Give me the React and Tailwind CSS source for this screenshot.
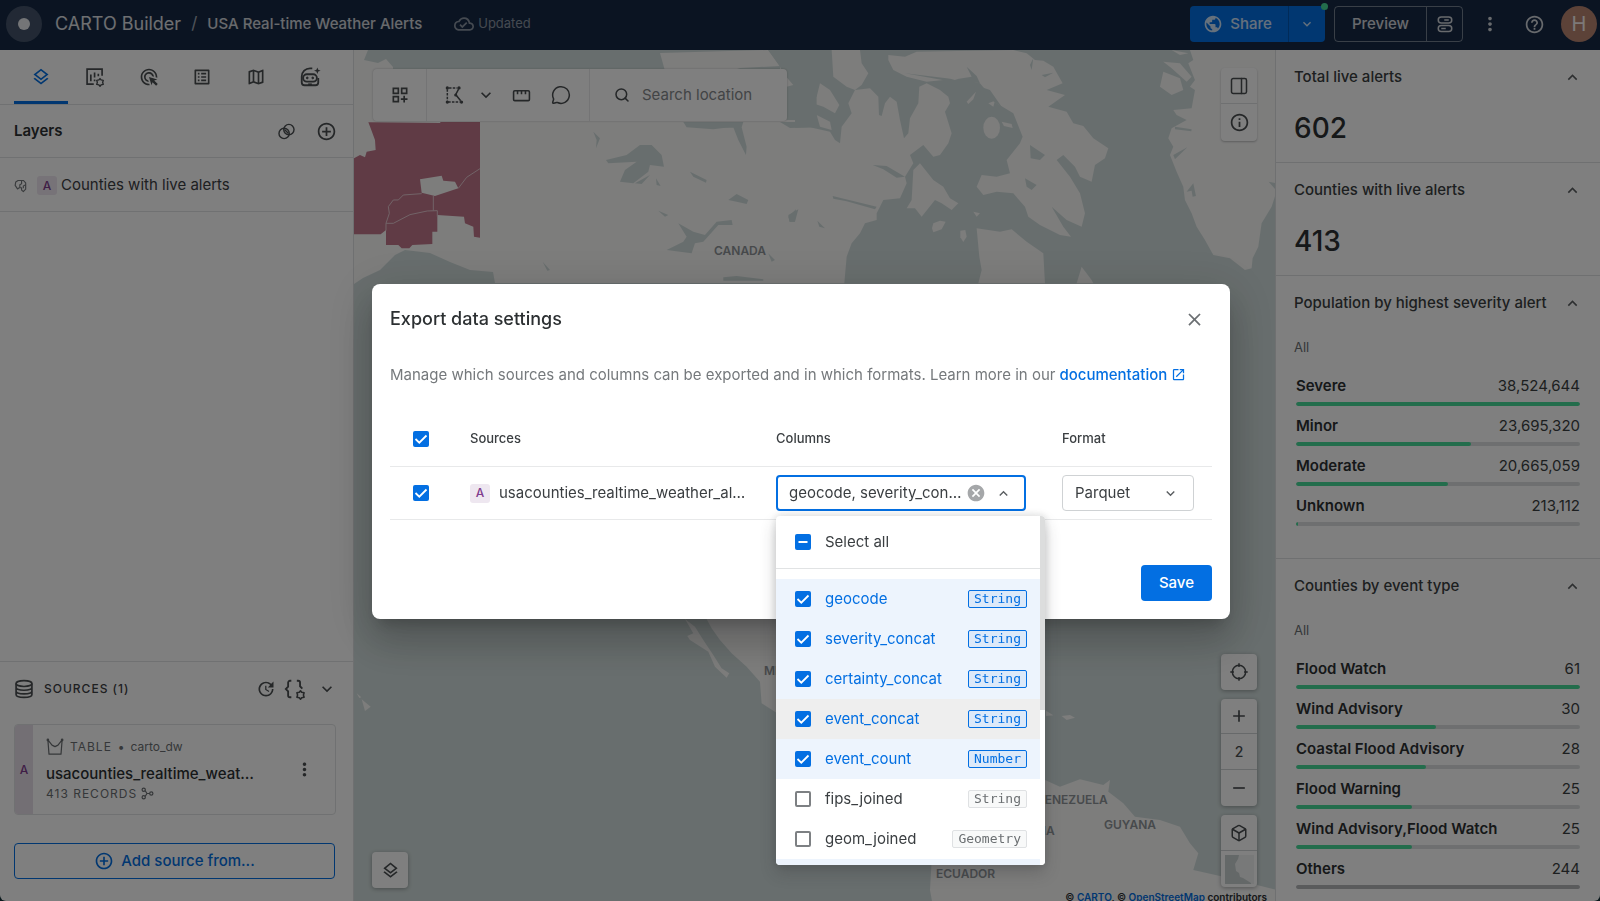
import React, { useState } from 'react';
import {
  MdOutlineLayers, MdAdsClick, MdOutlineListAlt, MdOutlineMap, MdOutlineCloudDone, MdPublic,
  MdKeyboardArrowDown, MdKeyboardArrowUp, MdMoreVert, MdHelpOutline, MdAddCircleOutline,
  MdOutlineDashboardCustomize, MdInfoOutline, MdCancel, MdClose, MdOpenInNew, MdAdd, MdRemove, MdUpdate,
} from 'react-icons/md';
import { MessageCircle, Search, PanelRight, Box } from 'lucide-react';

function Svg({ size = 20, sw = 2, children, className = '' }) {
  return (
    <svg width={size} height={size} viewBox="0 0 24 24" fill="none" stroke="currentColor" strokeWidth={sw} className={className} aria-hidden="true">
      {children}
    </svg>
  );
}

function Gear({ x, y }) {
  return (
    <g transform={`translate(${x} ${y})`}>
      <path d="M0-4.6 1.3-3 3.9-2.4 3.2 0 3.9 2.4 1.3 3 0 4.6-1.3 3-3.9 2.4-3.2 0-3.9-2.4-1.3-3Z" strokeWidth="1.7" strokeLinejoin="round" />
    </g>
  );
}

const ChartGear = () => (
  <Svg size={20}>
    <path d="M10.5 20.5H2.5V2.5h18v8" />
    <path d="M7 9v8M11.5 6.5v6M16 8v3M11.5 15v2" />
    <Gear x={18} y={18.5} />
  </Svg>
);

const Robot = () => (
  <Svg size={22}>
    <path d="M14.5 2.5H12a9 9 0 0 0-9 9V18a3 3 0 0 0 3 3h12a3 3 0 0 0 3-3v-5" />
    <rect x="4.5" y="9" width="15" height="8" rx="4" />
    <path d="M10 20h4" />
    <circle cx="9" cy="13" r="1" fill="currentColor" strokeWidth="1" />
    <circle cx="15" cy="13" r="1" fill="currentColor" strokeWidth="1" />
    <path d="M20 1.5l1 2.6 2.6 1-2.6 1-1 2.6-1-2.6-2.6-1 2.6-1Z" fill="currentColor" stroke="none" />
  </Svg>
);

const Blend = () => (
  <Svg size={19} sw={1.8}>
    <circle cx="9" cy="14.5" r="6.5" />
    <circle cx="15" cy="9.500" r="6.5" />
    <path d="M9.5 9.5 14.5 14.5" />
  </Svg>
);

const Database = () => (
  <Svg size={20}>
    <ellipse cx="12" cy="5.5" rx="9.5" ry="3.5" />
    <path d="M2.5 5.5v13c0 2 4 3.5 9.5 3.5s9.5-1.5 9.5-3.5v-13M2.5 10c0 2 4 3.500 9.5 3.500s9.5-1.500 9.5-3.500M2.5 14.300c0 2 4 3.500 9.5 3.500s9.5-1.500 9.5-3.500" />
  </Svg>
);

const BracesGear = () => (
  <Svg size={22}>
    <path d="M8 3H6.500a2 2 0 0 0-2 2v4.500L2 12l2.500 2.500V19a2 2 0 0 0 2 2H8" />
    <path d="M14 3h1.500a2 2 0 0 1 2 2v4l2.500 2.500" />
    <Gear x={18} y={18.500} />
  </Svg>
);

const Crown = () => (
  <Svg size={18} sw={1.600}>
    <path d="M2.500 2.500 8 9.500 12 11.500 16 9.500 21.500 2.500 20 21.500H4Z" strokeLinejoin="round" />
    <circle cx="2.500" cy="2.500" r="1" fill="currentColor" />
    <circle cx="21.500" cy="2.500" r="1" fill="currentColor" />
  </Svg>
);

const Relation = () => (
  <Svg size={13} sw={2.200}>
    <circle cx="5" cy="5" r="3" />
    <circle cx="5" cy="19" r="3" />
    <circle cx="19" cy="12" r="3" />
    <path d="M7.500 6.500 11 12l-3.500 5.500M11 12h5" />
  </Svg>
);

const Polygons = () => (
  <Svg size={14} sw={2} className="text-[#75797c]">
    <path d="M7 2.500h9l4 4v11l-4 4-3-2.500V15L9 15l-3 2-4-6 1-6Z" strokeLinejoin="round" />
    <path d="M13 3v5l-3 2v5M20 10l-4 2v4" />
  </Svg>
);

const Lasso = () => (
  <Svg size={20} sw={1.800}>
    <path d="M4 5v14M5 20.500h14M6 3.500h10" strokeDasharray="3 1.500" />
    <path d="M17.500 5 14 11.500 20 19" />
    <g fill="currentColor" stroke="none">
      <circle cx="4" cy="3.500" r="2" />
      <circle cx="4" cy="20.500" r="2" />
      <circle cx="18" cy="3.500" r="2" />
      <circle cx="21" cy="20.500" r="2" />
      <circle cx="14" cy="12" r="1.800" />
    </g>
  </Svg>
);

const Ruler = () => (
  <Svg size={19}>
    <rect x="2" y="6" width="20" height="12.500" rx="1.500" />
    <path d="M7 6v4.500M12 6v4.500M17 6v4.500" />
  </Svg>
);

const Locate = () => (
  <Svg size={20} sw={1.800}>
    <circle cx="12" cy="12" r="8" />
    <path d="M12 1.500v4.500M12 18v4.500M1.500 12h4.500M18 12h4.500" />
  </Svg>
);

const Toggles = () => (
  <Svg size={18}>
    <rect x="3" y="2.500" width="18" height="8" rx="4" />
    <rect x="3" y="14" width="18" height="8" rx="4" />
    <path d="M11 6.500h6M7 18h6" />
  </Svg>
);

function WorldMap() {
  return (
    <svg className="absolute inset-0 h-full w-full" viewBox="354 50 921 851" preserveAspectRatio="xMinYMin slice" aria-hidden="true">
      <rect x="354" y="50" width="2000" height="1200" fill="#d1dddc" />
      <g fill="#fafaf9">
        <path d="M354 50h14l-4 10 14 3 8-4 7 8v4h400v60H354Z" />
        <path d="M660 53l108-3 12 16-40 2-15 5-60-2Z" />
        <path d="M354 120H795v163H495l-2-11-23-2-20-8-20-9-25-3-10 5-15 15-17 8-9 6Z" />
        <g transform="translate(780 40) scale(.3333)">
          <path d="M-60 268 0 265 90 262 150 275 165 300 180 310 185 260 215 220 205 190 225 150 270 145 295 170 297 225 305 228 315 190 330 170 350 185 360 240 372 295 385 280 390 235 415 190 418 140 440 130 480 150 505 170 510 190 495 215 515 280 505 310 480 345 460 350 430 315 390 345 400 370 375 410 380 430 360 475 310 480 300 500 290 520 290 540 255 550 240 580 215 610 200 650 193 730-60 730Z" />
          <path d="M155 30h85l5 40 20 30-20 35-20 15-25-10-40-30Z" />
          <path d="M120 130 150 150 178 195 165 220 130 200 85 185 110 170Z" />
          <path d="M110 225 150 245 155 270 120 260Z" />
          <path d="M0 75 45 110v25l-25 5-2 100H0Z" />
          <path d="M325 45 375 50 410 35 700 30 740 40 765 60 790 62 820 80 848 130 800 150 855 165 805 200 860 215 880 250 910 258 940 295 985 325 975 355 945 375 935 425 900 410 885 380 850 345 830 360 870 410 900 460 915 520 905 560 860 540 815 500 850 560 873 590 840 585 780 555 745 530 735 500 700 460 650 455 610 465 590 440 605 405 650 410 690 400 680 360 720 310 728 290 700 220 650 190 600 130 560 120 490 120 440 125 380 110 340 90 325 60Z" />
          <path d="M400 390 420 370 460 420 490 440 510 475 535 490 515 510 485 490 465 480 425 530 405 505 380 505 395 480Z" />
          <ellipse cx="635" cy="263" rx="25" ry="33" />
          <path d="M460 550 480 542 497 545 485 568 460 577 456 565Z" />
          <path d="M541 572 556 570 560 590 550 606 541 592Z" />
          <path d="M665 245 695 252 698 264 672 258ZM560 185 588 155 580 178 565 192ZM625 190 645 182 640 200ZM580 515 600 520 590 530Z" />
          <path d="M590 565 660 575 695 568 740 605 790 640 795 730H595L605 690 598 650Z" />
          <path d="M905 680 935 720 940 730H890Z" />
          <path d="M1230 30 1240 60 1225 70 1245 120 1230 140 1245 150 1235 205 1180 210 1190 225 1220 240 1175 265 1165 295 1180 320 1170 345 1190 395 1210 440 1215 480 1235 520 1250 560 1275 600 1300 645 1350 655 1395 690 1415 685 1418 655 1435 620 1445 550 1475 500 1488 460V30Z" />
          <path d="M1150 65 1200 70 1235 110 1220 125 1175 85ZM1150 95 1200 115 1210 150 1175 165 1140 140ZM1175 30 1225 40 1200 45Z" />
        </g>
        <g transform="translate(350 610) scale(.3333)">
          <path d="M1005 27 1035 50 1060 90 1090 135 1115 175 1138 190 1130 203 1095 170 1075 125 1020 90 1012 78 1030 70Z" />
          <path d="M1070 27 1085 55 1110 90 1145 130 1190 170 1230 215 1235 280 1290 315 1500 330V27Z" />
          <path d="M35 268 62 290 45 303ZM20 250 34 262 28 264Z" />
        </g>
        <g transform="translate(770 460) scale(.3333)">
          <path d="M500 940H780L870 980 930 958 1000 975 1020 960 1015 995 1060 1030 1095 1070 1170 1080 1230 1100 1260 1150 1285 1180 1270 1230 1380 1255 1520 1290V1400H500L480 1290Z" />
          <path d="M875 768 900 765 915 773 890 780ZM828 752 850 766 828 768Z" />
        </g>
      </g>
      <g fill="#d1dddc">
        <g transform="translate(350 40) scale(.3333)">
          <path d="M768 360 830 345 870 315 905 315 935 345 942 380 900 375 895 395 850 430 810 425 825 390 860 365 775 370Z" />
          <path d="M985 550 1030 575 1065 585 1100 545 1145 540 1148 555 1105 555 1060 605 1035 610 1025 640 950 630 1000 605 1010 590Z" />
          <path d="M1000 246 1180 246 1175 262 1120 264 1090 268 1010 262ZM1150 262 1175 262 1190 320 1188 345 1165 300Z" />
          <path d="M1290 246H1400V262L1320 264Z" />
          <path d="M1255 30H1400V240H1310V140L1330 135 1300 100 1290 80Z" />
          <path d="M730 275 750 295 738 325 740 300ZM1020 395 1070 420 1068 428 1030 410ZM1135 480 1160 462 1195 480 1190 492 1160 485ZM925 512 955 525 945 530ZM1315 530 1338 508 1335 545 1320 545ZM855 430 900 405 875 432ZM918 415 932 438 920 435ZM1120 712 1160 708 1240 718V722H1120ZM1255 640 1275 660 1265 665ZM578 665 600 690 592 692Z" />
        </g>
        <g transform="translate(780 40) scale(.3333)">
          <path d="M750 315 795 345 780 360 752 355ZM735 415 770 435 755 450 740 440ZM278 375 320 378 375 410 350 413 310 388ZM158 468 290 500 285 508 200 484 160 476ZM25 525 55 508 45 545 28 545ZM112 542 135 565 118 560ZM1185 260 1235 268 1234 274 1185 268ZM1180 345 1222 322 1185 358ZM1220 455 1240 430 1248 468 1238 470 1235 452Z" />
          <path d="M375 100 500 115 600 130 590 108 560 80 575 110 500 122ZM570 130 630 150 665 200 620 170ZM750 75 760 55 755 90ZM785 105 820 98 795 112ZM1466 425 1488 430V450Z" />
        </g>
      </g>
      <g transform="translate(350 40) scale(.3333)">
        <path fill="#c0768a" d="M55 247 270 249 272 246H390V593L372 590 370 560 345 550 342 530 262 525V575H247V612L187 615 178 625H155L145 615H108V570L92 583H12V355L30 345 45 352 50 335 77 330 75 300 62 265Z" />
        <path fill="#fafaf9" d="M210 418 275 407 280 422 315 425 325 445 255 468 215 458Z" />
        <path fill="none" stroke="#e4c7cf" strokeWidth="3" d="M325 445 350 412 390 386M215 461 160 465 145 480H130L115 500 118 520 108 550 130 550 180 524 232 513 262 512V530M250 468V512M108 550V572" />
      </g>
      <g fill="#8f9498" fontFamily="Inter, sans-serif" fontSize="12" fontWeight="600">
        <text x="714" y="255">CANADA</text>
        <text x="764" y="675">MEXICO</text>
        <text x="1036" y="804">VENEZUELA</text>
        <text x="990" y="835">COLOMBIA</text>
        <text x="1104" y="829">GUYANA</text>
        <text x="936" y="878">ECUADOR</text>
      </g>
    </svg>
  );
}

function Badge() {
  return <span className="flex h-[19px] w-5 shrink-0 items-center justify-center rounded-[3px] bg-[#eee7f0] text-xs font-medium text-[#7f3c8d]">A</span>;
}

function Check({ label, checked, mixed, onChange }) {
  const on = checked || mixed;
  return (
    <span className="grid h-4 w-4 shrink-0 place-items-center">
      <input
        type="checkbox"
        aria-label={label}
        checked={checked}
        onChange={onChange}
        className={`col-start-1 row-start-1 m-0 h-4 w-4 appearance-none rounded-[2px] ${on ? 'bg-[#036fe2]' : 'border-2 border-[#7d8083] bg-white'}`}
      />
      {on && (
        <svg viewBox="0 0 16 16" className="pointer-events-none col-start-1 row-start-1 h-4 w-4" fill="none" stroke="#fff" strokeWidth="1.800">
          <path d={mixed ? 'M3.500 8h9' : 'M2.500 8 6.300 11.700 13.500 4.500'} />
        </svg>
      )}
    </span>
  );
}

function TopBar() {
  return (
    <header className="flex h-[50px] shrink-0 items-center bg-[#162945] pb-0.5 pl-1.5 pr-[3px] text-white/80">
      <a href="#home" aria-label="Home" className="flex h-9 w-9 items-center justify-center rounded-full bg-white/20">
        <span className="h-3 w-3 rounded-full bg-[#e8ebef]" />
      </a>
      <span className="ml-[13px] text-lg leading-6 text-white/85">CARTO Builder</span>
      <span className="mx-2.5 text-[17px] text-white/60">/</span>
      <h1 className="text-[15px] font-medium text-white/80">USA Real-time Weather Alerts</h1>
      <div className="ml-8 flex items-center gap-1 text-[13px] text-white/50">
        <MdOutlineCloudDone size={20} />
        Updated
      </div>
      <div className="ml-auto flex items-center">
        <div className="relative flex h-9 rounded bg-[#036fe2] text-white/80">
          <button className="flex items-center gap-[7px] border-r border-[#0257b3] pl-[13px] pr-4 text-[15px] font-medium">
            <MdPublic size={20} />
            Share
          </button>
          <button aria-label="Share options" className="flex w-9 items-center justify-center"><MdKeyboardArrowDown size={16} /></button>
          <span className="absolute -right-[3px] -top-[3px] h-[7px] w-[7px] rounded-full bg-[#47db99]" />
        </div>
        <div className="ml-[9px] flex h-9 rounded border border-white/40">
          <button className="border-r border-white/40 px-[17px] text-[15px] font-medium">Preview</button>
          <button aria-label="Preview options" className="flex w-[35px] items-center justify-center"><Toggles /></button>
        </div>
        <button aria-label="More" className="ml-4"><MdMoreVert size={22} /></button>
        <button aria-label="Help" className="ml-[23px]"><MdHelpOutline size={21} /></button>
        <button className="ml-4 flex h-9 w-9 items-center justify-center rounded-full bg-[#b88471] text-xl text-white/90">H</button>
      </div>
    </header>
  );
}

function LeftPanel() {
  const tabs = [
    ['Layers', <MdOutlineLayers size={20} />],
    ['Widgets', <ChartGear />],
    ['Interactions', <MdAdsClick size={20} />],
    ['Legend', <MdOutlineListAlt size={20} />],
    ['Basemap', <MdOutlineMap size={20} />],
    ['Agents', <Robot />],
  ];
  return (
    <aside className="flex w-[354px] shrink-0 flex-col border-r border-[#dfe1e3] bg-white text-[#4a4e51]">
      <div className="flex h-[55px] border-b border-[#e1e3e4] pl-3.5 pr-4">
        {tabs.map(([name, icon], i) => (
          <button key={name} aria-label={name} className={`flex flex-1 items-center justify-center border-b-[3px] pt-[3px] ${i === 0 ? 'border-[#036fe2] text-[#036fe2]' : 'border-transparent'}`}>{icon}</button>
        ))}
      </div>
      <div className="flex h-[53px] items-center border-b border-[#e1e3e4] pl-3.5 pr-4">
        <h2 className="flex-1 text-[15px] font-semibold text-[#2c3032]">Layers</h2>
        <button aria-label="Blending"><Blend /></button>
        <button aria-label="Add layer" className="ml-5"><MdAddCircleOutline size={21} /></button>
      </div>
      <div className="flex h-[54px] items-center border-b border-[#e1e3e4] pl-3.5 pt-0.5 text-[15px] text-[#3c4043]">
        <Polygons />
        <span className="ml-[9px]"><Badge /></span>
        <span className="ml-1">Counties with live alerts</span>
      </div>
      <div className="flex-1" />
      <section className="flex flex-col border-t border-[#e1e3e4] pb-[22px]">
        <div className="flex h-[54px] items-center pl-3.5 pr-4">
          <Database />
          <h2 className="ml-2.5 flex-1 text-xs font-medium tracking-[1px] text-[#3c4043]">SOURCES (1)</h2>
          <button aria-label="Data freshness"><MdUpdate size={20} /></button>
          <button aria-label="SQL parameters" className="ml-2"><BracesGear /></button>
          <button aria-label="Collapse sources" className="ml-[11px]"><MdKeyboardArrowDown size={20} /></button>
        </div>
        <div className="ml-3.5 mr-[17px] mt-2 flex h-[91px] overflow-hidden rounded border border-[#e1e3e4]">
          <div className="flex w-[18px] shrink-0 items-center justify-center bg-[#e6dfe9] text-xs font-medium text-[#7f3c8d]">A</div>
          <div className="flex min-w-0 flex-1 flex-col justify-center pl-[13px] text-xs">
            <div className="flex items-center gap-1.5 text-[#6b6f72]">
              <Crown />
              <span className="tracking-[1px]">TABLE</span>
              <span>•</span>
              <span>carto_dw</span>
            </div>
            <div className="mt-1.5 w-[217px] truncate text-[15px] font-medium leading-6 text-[#2c3032]">usacounties_realtime_weather_alerts</div>
            <div className="flex items-center gap-1 leading-4 text-[#6b6f72]">
              <span className="tracking-[1px]">413 RECORDS</span>
              <Relation />
            </div>
          </div>
          <button aria-label="Source options" className="mr-5"><MdMoreVert size={21} /></button>
        </div>
        <button className="ml-3.5 mr-[18px] mt-7 flex h-9 items-center justify-center gap-[7px] rounded border border-[#036fe2] text-[15px] font-medium text-[#036fe2]">
          <MdAddCircleOutline size={20} />
          Add source from...
        </button>
      </section>
    </aside>
  );
}

const mapCard = 'rounded bg-white shadow-[0_1px_4px_rgba(44,48,50,0.4)]';

function MapArea() {
  return (
    <main className="relative min-w-0 flex-1 overflow-hidden text-[#4a4e51]">
      <WorldMap />
      <div className="absolute left-[19px] top-[19px] flex h-[52px] w-[414px] rounded bg-white shadow-[0_0_2px_rgba(44,48,50,0.3)]">
        <button aria-label="Add widget" className="flex w-[54px] items-center justify-center border-r border-[#e8e9ea]"><MdOutlineDashboardCustomize size={20} /></button>
        <div className="flex w-[163px] items-center border-r border-[#e8e9ea] pl-[17px]">
          <button aria-label="Selection tool"><Lasso /></button>
          <button aria-label="Selection modes" className="ml-3"><MdKeyboardArrowDown size={20} /></button>
          <button aria-label="Measure" className="ml-4"><Ruler /></button>
          <button aria-label="Comments" className="ml-5"><MessageCircle size={20} strokeWidth={1.8} /></button>
        </div>
        <label className="flex min-w-0 flex-1 items-center gap-3 pl-6">
          <Search size={16} strokeWidth={2.3} className="shrink-0" />
          <input aria-label="Search location" placeholder="Search location" className="min-w-0 flex-1 bg-transparent text-[15px] outline-none placeholder:text-[#85898c]" />
        </label>
      </div>
      <div className="absolute right-[18px] top-[18px] flex w-9 flex-col divide-y divide-[#dfe1e3] rounded bg-white shadow-[0_1px_2px_rgba(44,48,50,0.3)]">
        <button aria-label="Toggle panel" className="flex h-9 items-center justify-center"><PanelRight size={20} strokeWidth={1.8} /></button>
        <button aria-label="Map info" className="flex h-[37px] items-center justify-center"><MdInfoOutline size={21} /></button>
      </div>
      <button aria-label="Legend" className={`absolute bottom-[13px] left-[18px] flex h-9 w-9 items-center justify-center ${mapCard}`}><MdOutlineLayers size={19} /></button>
      <div className="absolute bottom-[14px] right-[18px] flex w-9 flex-col gap-[9px]">
        <button aria-label="Locate" className={`flex h-9 items-center justify-center ${mapCard}`}><Locate /></button>
        <div className={`flex flex-col divide-y divide-[#cfd2d4] ${mapCard}`}>
          <button aria-label="Zoom in" className="flex h-[35px] items-center justify-center"><MdAdd size={20} /></button>
          <span className="flex h-9 items-center justify-center text-sm font-medium">2</span>
          <button aria-label="Zoom out" className="flex h-9 items-center justify-center"><MdRemove size={20} /></button>
        </div>
        <div className={`flex flex-col divide-y divide-[#cfd2d4] ${mapCard}`}>
          <button aria-label="3D view" className="flex h-9 items-center justify-center"><Box size={18} /></button>
          <button aria-label="Basemap" className="flex h-9 items-center justify-center">
            <svg width="29" height="29" viewBox="0 0 29 29"><rect width="29" height="29" fill="#f1f2f2" /><path d="M0 0h14l-1 4-3 5 1 7 3 2 1 4 3 1 8 5v1H0Z" fill="#c8d0d0" /></svg>
          </button>
        </div>
      </div>
      <div className="absolute -bottom-1 right-2 text-[10px] font-semibold leading-4 text-[#2c3032]">
        © <a href="#carto" className="text-[#036fe2]">CARTO</a>, © <a href="#osm" className="text-[#036fe2]">OpenStreetMap</a> contributors
      </div>
    </main>
  );
}

function Widget({ title, children, className = '' }) {
  return (
    <section className={`border-b border-[#dfe1e3] px-[18px] ${className}`}>
      <div className="flex h-[54px] items-center justify-between">
        <h3 className="text-[15px] font-medium text-[#3a3e41]">{title}</h3>
        <button aria-label={`Collapse ${title}`}><MdKeyboardArrowUp size={19} /></button>
      </div>
      {children}
    </section>
  );
}

function Bars({ rows, max }) {
  return (
    <>
      <p className="mt-2 text-[13px] leading-[18px] text-[#6b6f72]">All</p>
      <ul className="mt-[18px] px-0.5">
        {rows.map(([name, value, n]) => (
          <li key={name} className="h-10 pt-0.5">
            <div className="flex justify-between text-[15px] leading-5 text-[#3a3e41]">
              <span className="font-semibold text-[#2c3032]">{name}</span>
              <span>{value}</span>
            </div>
            <div className="mt-1.5 h-1 overflow-hidden rounded-full bg-[#dcdfe0]">
              <div
                className={`h-full rounded-full ${name === 'Others' ? 'bg-[#b4b6b8]' : 'bg-[#47db99]'}`}
                style={{ width: `${Math.min(100, (n / max) * 100)}%` }}
              />
            </div>
          </li>
        ))}
      </ul>
    </>
  );
}

function RightPanel() {
  return (
    <aside className="w-[325px] shrink-0 overflow-hidden border-l border-[#dfe1e3] bg-white text-[#5a5e61]">
      <Widget title="Total live alerts" className="h-[113px]"><p className="mt-1.5 text-[28px] font-medium leading-9 text-[#2c3032]">602</p></Widget>
      <Widget title="Counties with live alerts" className="h-[113px]"><p className="mt-1.5 text-[28px] font-medium leading-9 text-[#2c3032]">413</p></Widget>
      <Widget title="Population by highest severity alert" className="h-[283px]">
        <Bars
          max={38524644}
          rows={[['Severe', '38,524,644', 38524644], ['Minor', '23,695,320', 23695320], ['Moderate', '20,665,059', 20665059], ['Unknown', '213,112', 213112]]}
        />
      </Widget>
      <Widget title="Counties by event type" className="pb-5">
        <Bars
          max={61}
          rows={[['Flood Watch', '61', 61], ['Wind Advisory', '30', 30], ['Coastal Flood Advisory', '28', 28], ['Flood Warning', '25', 25], ['Wind Advisory,Flood Watch', '25', 25], ['Others', '244', 244]]}
        />
      </Widget>
    </aside>
  );
}

const COLUMNS = [
  ['geocode', 'String'], ['severity_concat', 'String'], ['certainty_concat', 'String'], ['event_concat', 'String'],
  ['event_count', 'Number'], ['fips_joined', 'String'], ['geom_joined', 'Geometry'],
];

function ColumnsMenu({ picked, toggle, toggleAll }) {
  return (
    <div className="absolute -left-0.5 top-full z-10 mt-[7px] flex w-[269px] overflow-hidden rounded bg-white shadow-[0_8px_16px_rgba(44,48,50,0.24),0_0_8px_rgba(44,48,50,0.16)]">
      <div className="min-w-0 flex-1">
        <label className="flex h-[53px] items-center gap-3.5 border-b border-[#e1e3e4] px-[19px]">
          <Check mixed label="Select all" checked={false} onChange={toggleAll} />
          Select all
        </label>
        <ul className="pt-2.5">
          {COLUMNS.map(([name, type]) => {
            const on = picked.includes(name);
            return (
              <li key={name} className={on ? (name === 'event_concat' ? 'bg-[#eeeeee]' : 'bg-[#edf4fd]') : ''}>
                <label className={`flex h-10 items-center gap-3.5 pl-[19px] pr-[13px] ${on ? 'text-[#036fe2]' : ''}`}>
                  <Check label={name} checked={on} onChange={() => toggle(name)} />
                  <span className="flex-1">{name}</span>
                  <span className={`rounded-[2px] border px-[5px] font-['DejaVu_Sans_Mono',monospace] text-[13px] leading-4 ${on ? 'border-[#036fe2] bg-[#dce9f9]' : 'border-[#dfe1e3] bg-[#f8f9f9] text-[#6b6f72]'}`}>{type}</span>
                </label>
              </li>
            );
          })}
        </ul>
        <div className="h-1.5 bg-[#edf4fd]" />
      </div>
      <div className="w-[5px] bg-white"><div className="h-[194px] bg-[#dcdddd]" /></div>
    </div>
  );
}

function ExportDialog() {
  const [picked, setPicked] = useState(['geocode', 'severity_concat', 'certainty_concat', 'event_concat', 'event_count']);
  const [sel, setSel] = useState(true);
  const toggle = (n) => setPicked((p) => (p.includes(n) ? p.filter((x) => x !== n) : [...p, n]));
  const toggleAll = () => setPicked((p) => (p.length < COLUMNS.length ? COLUMNS.map((c) => c[0]) : []));
  return (
    <div className="fixed inset-0 flex items-center justify-center bg-black/50 pl-0.5 pt-0.5">
      <div role="dialog" aria-labelledby="dlg-title" className="w-[858px] rounded-lg bg-white px-[18px] pb-[18px] text-[15px] text-[#3a3e41] shadow-[0_11px_15px_-7px_rgba(0,0,0,0.2),0_24px_38px_3px_rgba(0,0,0,0.14),0_9px_46px_8px_rgba(0,0,0,0.12)]">
        <div className="flex h-[71px] items-center justify-between pr-[7px]">
          <h2 id="dlg-title" className="text-lg font-medium text-[#2c3032]">Export data settings</h2>
          <button aria-label="Close" className="text-[#6b6f72]"><MdClose size={21} /></button>
        </div>
        <p className="mt-2 flex h-6 items-center gap-1 whitespace-nowrap text-[#75797c]">
          Manage which sources and columns can be exported and in which formats. Learn more in our
          <a href="#docs" className="flex items-center gap-1 font-medium text-[#036fe2]">documentation <MdOpenInNew size={15} /></a>
        </p>
        <table className="mt-[25px] w-full table-fixed text-left">
          <thead>
            <tr className="h-[55px] border-b border-[#e8e9ea] text-[13px] text-[#3a3e41]">
              <th className="w-[80px] pl-[23px]"><Check label="Select all sources" checked={sel} onChange={() => setSel(!sel)} /></th>
              <th className="w-[306px] font-medium">Sources</th>
              <th className="w-[286px] font-medium">Columns</th>
              <th className="font-medium">Format</th>
            </tr>
          </thead>
          <tbody>
            <tr className="h-[53px] border-b border-[#e8e9ea]">
              <td className="pl-[23px]"><Check label="Select source" checked={sel} onChange={() => setSel(!sel)} /></td>
              <td>
                <div className="flex items-center gap-[9px]">
                  <Badge />
                  <span className="w-[252px] truncate">usacounties_realtime_weather_alerts</span>
                </div>
              </td>
              <td>
                <div className="relative flex h-9 w-[250px] items-center rounded border-2 border-[#036fe2] pl-[11px] pr-[13px]">
                  <button aria-haspopup="listbox" aria-expanded="true" className="w-[175px] shrink-0 truncate text-left">geocode, severity_concat, certainty_concat</button>
                  <button aria-label="Clear" className="ml-0.5 text-[#a5a7a9]"><MdCancel size={20} /></button>
                  <button aria-label="Close list" className="ml-[9px] text-[#5a5e61]"><MdKeyboardArrowUp size={17} /></button>
                  <ColumnsMenu picked={picked} toggle={toggle} toggleAll={toggleAll} />
                </div>
              </td>
              <td>
                <div className="grid w-[132px] items-center">
                  <select aria-label="Format" defaultValue="Parquet" className="col-start-1 row-start-1 h-9 w-full appearance-none rounded border border-[#cfd2d4] bg-white pl-3">
                    <option>Parquet</option>
                    <option>CSV</option>
                  </select>
                  <MdKeyboardArrowDown size={17} className="pointer-events-none col-start-1 row-start-1 mr-[15px] justify-self-end text-[#5a5e61]" />
                </div>
              </td>
            </tr>
          </tbody>
        </table>
        <div className="mt-[45px] flex justify-end">
          <button className="h-9 rounded bg-[#036fe2] px-[18px] font-medium text-white">Save</button>
        </div>
      </div>
    </div>
  );
}

export default function App() {
  return (
    <div className="h-screen bg-[#16323a] font-['Inter','Liberation_Sans',sans-serif]">
      <div className="flex h-full flex-col overflow-hidden rounded-b-md">
        <TopBar />
        <div className="flex min-h-0 flex-1">
          <LeftPanel />
          <MapArea />
          <RightPanel />
        </div>
      </div>
      <ExportDialog />
    </div>
  );
}
